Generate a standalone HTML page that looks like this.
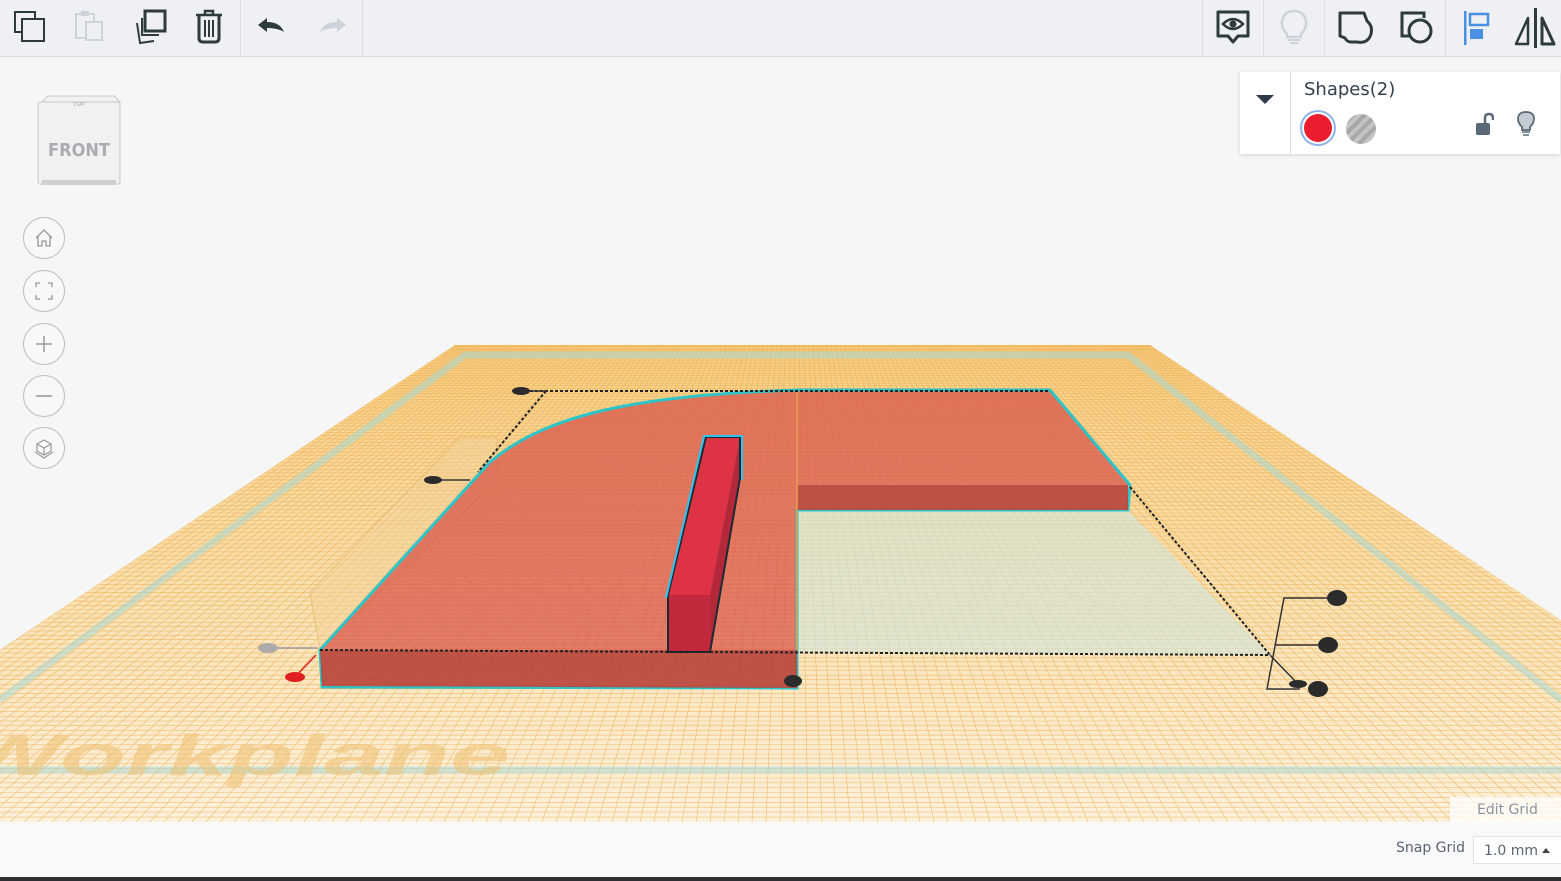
<!DOCTYPE html>
<html><head><meta charset="utf-8"><style>
html,body{margin:0;padding:0;width:1561px;height:881px;overflow:hidden;background:#f6f6f7;font-family:"Liberation Sans",sans-serif}
#tb{position:absolute;left:0;top:0;width:1561px;height:56px;background:#eff0f3;border-bottom:1px solid #dcdee3}
.div{position:absolute;top:0;width:1px;height:56px;background:#dcdee3}
.ic{position:absolute;top:8px}
#panel{position:absolute;left:1240px;top:72px;width:320px;height:82px;background:#fff;box-shadow:0 1px 4px rgba(0,0,0,.15)}
.nav{position:absolute;left:23px;width:42px;height:42px;border:1px solid #b9bcc2;border-radius:50%;box-sizing:border-box;background:#f8f8f8}
</style></head><body>
<svg id="scene" width="1561" height="881" style="position:absolute;left:0;top:0">
<defs>
<clipPath id="wp"><polygon points="455,345 1150,345 1561,620 1561,822 0,822 0,650"/></clipPath>
<linearGradient id="fade" x1="0" y1="0" x2="0" y2="1"><stop offset="0" stop-color="#f6cf86"/><stop offset="0.5" stop-color="#f9e0b0"/><stop offset="1" stop-color="#fdf1dc"/></linearGradient>
</defs>
<rect x="0" y="822" width="1561" height="55" fill="#f9f9f9"/>
<rect x="0" y="877" width="1561" height="4" fill="#2e2e33"/>
<polygon points="455,345 1150,345 1561,620 1561,822 0,822 0,650" fill="url(#fade)"/>
<g id="grid" clip-path="url(#wp)" stroke="#eeaa48" stroke-width="0.6" opacity="0.75"></g>
<g clip-path="url(#wp)" fill="none" stroke="#a8d8d4" stroke-width="7" opacity="0.55">
<polyline points="0,700 465,355 1128,355 1561,700"/>
<line x1="0" y1="770" x2="1561" y2="770"/>
</g>
<text x="0" y="0" font-size="80" font-weight="bold" font-style="italic" fill="#efc47a" opacity="0.6" font-family="Liberation Sans" transform="translate(-40,775) scale(1.35,0.72)">Workplane</text>
<polygon points="797,510 1128,510 1270,655 797,652" fill="#cfe6df" opacity="0.6"/>
<polygon points="310,592 460,437 497,437 497,480 320,650" fill="#f3d29a" opacity="0.5" stroke="#e0a850" stroke-width="1"/>
<path d="M320,650 L490,462 C540,420 620,395 800,390 L1050,390 L1128,485 L797,485 L797,650 Z" fill="#d8524a" opacity="0.72"/>
<path d="M320,650 L490,462 C540,420 620,395 800,390 L1050,390 L1130,485 L1128,510 L797,510 L797,688 L322,687 Z" fill="none" stroke="#2ec4c8" stroke-width="3"/>
<polygon points="797,485 1128,485 1128,510 797,510" fill="#b8433b" opacity="0.9"/>
<polygon points="320,650 797,650 797,688 322,686" fill="#b8433b" opacity="0.9"/>
<line x1="797" y1="390" x2="797" y2="650" stroke="#e0a050" stroke-width="1.5"/>
<polygon points="706,437 740,437 710,595 668,595" fill="#dd3344"/>
<polygon points="740,437 740,478 710,652 710,595" fill="#b3283a"/>
<polygon points="668,595 710,595 710,652 668,652" fill="#c02a3c"/>
<polygon points="706,437 740,437 740,478 710,652 668,652 668,595" fill="none" stroke="#1c2a33" stroke-width="2"/>
<polyline points="666,598 704,436 742,436 742,480" fill="none" stroke="#2ec4f0" stroke-width="2"/>
<g stroke="#222" stroke-width="2" stroke-dasharray="3,2" fill="none">
<line x1="520" y1="391" x2="1050" y2="391"/>
<line x1="546" y1="391" x2="478" y2="472"/>
<line x1="320" y1="650" x2="1270" y2="655"/>
<line x1="1130" y1="487" x2="1270" y2="655"/>
</g>
<g stroke="#333" stroke-width="1.5" fill="none">
<line x1="521" y1="391" x2="546" y2="391"/>
<line x1="433" y1="480" x2="470" y2="480"/>
<polyline points="1337,598 1284,598 1267,689 1300,689"/>
<line x1="1276" y1="645" x2="1328" y2="645"/>
<line x1="1270" y1="655" x2="1298" y2="684"/>
<line x1="268" y1="648" x2="318" y2="648" stroke="#999"/>
<line x1="295" y1="677" x2="316" y2="655" stroke="#d22"/>
</g>
<g fill="#2b2b2b">
<ellipse cx="521" cy="391" rx="9" ry="4"/>
<ellipse cx="433" cy="480" rx="9" ry="4"/>
<ellipse cx="793" cy="681" rx="9" ry="6"/>
<ellipse cx="1337" cy="598" rx="10" ry="8"/>
<ellipse cx="1328" cy="645" rx="10" ry="8"/>
<ellipse cx="1318" cy="689" rx="10" ry="8"/>
<ellipse cx="1298" cy="684" rx="9" ry="4"/>
</g>
<ellipse cx="268" cy="648" rx="10" ry="5" fill="#aaa"/>
<ellipse cx="295" cy="677" rx="10" ry="5" fill="#dd1f1f"/>
</svg>

<div id="tb">
 <div class="div" style="left:240px"></div><div class="div" style="left:362px"></div>
 <div class="div" style="left:1202px"></div><div class="div" style="left:1263px"></div><div class="div" style="left:1324px"></div><div class="div" style="left:1445px"></div>
 <svg class="ic" style="left:12px" width="36" height="36"><rect x="3" y="4" width="20" height="20" fill="none" stroke="#2d3a3e" stroke-width="2"/><rect x="10" y="11" width="22" height="22" fill="#eff0f3" stroke="#2d3a3e" stroke-width="2"/></svg>
 <svg class="ic" style="left:72px" width="36" height="36"><rect x="4" y="6" width="18" height="24" fill="none" stroke="#ccd3db" stroke-width="2"/><rect x="9" y="3" width="8" height="5" fill="#ccd3db"/><rect x="14" y="14" width="16" height="18" fill="#eff0f3" stroke="#ccd3db" stroke-width="2"/></svg>
 <svg class="ic" style="left:132px" width="36" height="36"><rect x="13" y="3" width="20" height="20" fill="none" stroke="#2d3a3e" stroke-width="3"/><path d="M10,10 L10,27 L27,27" fill="none" stroke="#2d3a3e" stroke-width="2"/><path d="M5,15 L8,35 L22,33" fill="none" stroke="#2d3a3e" stroke-width="2"/></svg>
 <svg class="ic" style="left:192px" width="36" height="36"><path d="M4,7 H30 M13,7 V3 H21 V7" fill="none" stroke="#2d3a3e" stroke-width="2.5"/><path d="M7,8 V30 Q7,34 11,34 H23 Q27,34 27,30 V8" fill="none" stroke="#2d3a3e" stroke-width="3"/><path d="M13,12 V29 M17,12 V29 M21,12 V29" stroke="#2d3a3e" stroke-width="2"/></svg>
 <svg class="ic" style="left:254px" width="36" height="36"><path d="M4,17 L13,10 V14 Q26,14 30,24 Q24,20 13,20 V24 Z" fill="#2d3a3e"/></svg>
 <svg class="ic" style="left:314px" width="36" height="36"><path d="M32,17 L23,10 V14 Q10,14 6,24 Q12,20 23,20 V24 Z" fill="#ccd3db"/></svg>
 <svg class="ic" style="left:1214px" width="40" height="40"><path d="M4,4 H34 V28 H24 L19,34 L14,28 H4 Z" fill="none" stroke="#2d3a3e" stroke-width="3" stroke-linejoin="round"/><path d="M9,16 Q19,6 29,16 Q19,26 9,16Z" fill="none" stroke="#2d3a3e" stroke-width="2.5"/><circle cx="19" cy="16" r="3.5" fill="#2d3a3e"/></svg>
 <svg class="ic" style="left:1277px" width="36" height="40"><path d="M10,26 Q4,20 5,13 Q7,3 17,3 Q27,3 29,13 Q30,20 24,26 V29 H10 Z" fill="none" stroke="#ccd3db" stroke-width="2.5"/><path d="M11,32 H23 M13,35 H21" stroke="#ccd3db" stroke-width="2"/></svg>
 <svg class="ic" style="left:1337px" width="40" height="40"><path d="M3,5 H27 L30,13 Q36,18 34,26 Q31,36 20,34 L14,34 Q10,34 8,30 L3,28 Z" fill="none" stroke="#2d3a3e" stroke-width="3" stroke-linejoin="round"/></svg>
 <svg class="ic" style="left:1399px" width="40" height="40"><path d="M22,5 H3 V28 H10" fill="none" stroke="#2d3a3e" stroke-width="3"/><path d="M22,5 H25 V10" fill="none" stroke="#2d3a3e" stroke-width="3"/><circle cx="21" cy="23" r="11" fill="none" stroke="#2d3a3e" stroke-width="3"/></svg>
 <svg class="ic" style="left:1460px" width="36" height="40"><rect x="4" y="3" width="2.5" height="34" fill="#4a90e2"/><rect x="10" y="6" width="18" height="11" fill="none" stroke="#4a90e2" stroke-width="2.5"/><rect x="10" y="21" width="13" height="10" fill="#4a90e2"/></svg>
 <svg class="ic" style="left:1514px" width="44" height="40"><path d="M14,10 V36 H2 Z" fill="none" stroke="#2d3a3e" stroke-width="2.5" stroke-linejoin="round"/><rect x="20" y="0" width="3" height="40" fill="#2d3a3e"/><path d="M28,10 V36 H40 Z" fill="none" stroke="#2d3a3e" stroke-width="3" stroke-linejoin="round"/></svg>
</div>

<div id="panel">
 <div style="position:absolute;left:50px;top:0;width:1px;height:82px;background:#dde0e4"></div>
 <div style="position:absolute;left:16px;top:23px;width:0;height:0;border-left:9px solid transparent;border-right:9px solid transparent;border-top:9px solid #2d3a4a"></div>
 <div style="position:absolute;left:64px;top:7px;font-family:'DejaVu Sans',sans-serif;font-size:18px;color:#33404e">Shapes(2)</div>
 <div style="position:absolute;left:60px;top:38px;width:36px;height:36px;border-radius:50%;border:2px solid #8fb4e8;box-sizing:border-box;background:#fff"></div>
 <div style="position:absolute;left:64px;top:42px;width:28px;height:28px;border-radius:50%;background:#ea1c2e"></div>
 <div style="position:absolute;left:106px;top:42px;width:30px;height:30px;border-radius:50%;background:repeating-linear-gradient(135deg,#c4c4c4 0 4px,#a8a8a8 4px 8px)"></div>
 <svg style="position:absolute;left:234px;top:40px" width="20" height="26"><path d="M11,11 V6 Q11,2 15,2 Q19,2 19,6 V8" fill="none" stroke="#5a6878" stroke-width="2.5"/><rect x="2" y="11" width="14" height="12" rx="2" fill="#5a6878"/></svg>
 <svg style="position:absolute;left:276px;top:38px" width="20" height="28"><path d="M6,17 Q2,13 2,9 Q2,2 10,2 Q18,2 18,9 Q18,13 14,17 V20 H6 Z" fill="#c5cbd2" stroke="#5a6878" stroke-width="1.8"/><path d="M6,22 H14 M7,25 H13" stroke="#5a6878" stroke-width="1.6"/></svg>
</div>

<svg style="position:absolute;left:34px;top:92px" width="92" height="100">
 <path d="M8,10 L14,4 H80 L86,10 Z" fill="#f2f2f2" stroke="#c8c8c8"/>
 <rect x="4" y="10" width="82" height="82" rx="2" fill="#f1f1f1" stroke="#c8c8c8"/>
 <rect x="8" y="88" width="74" height="5" fill="#cfcfcf"/>
 <text x="45" y="14" font-size="6" font-weight="bold" text-anchor="middle" fill="#bbb">TOP</text>
 <text x="45" y="64" font-size="18" font-weight="bold" text-anchor="middle" fill="#a9acb0" font-family="DejaVu Sans" transform="translate(45,0) scale(0.9,1) translate(-45,0)">FRONT</text>
</svg>

<div class="nav" style="top:217px"><svg width="40" height="40"><path d="M12,20 L20,12 L28,20 M14,18 V28 H18 V23 H22 V28 H26 V18" fill="none" stroke="#999" stroke-width="1.3"/></svg></div>
<div class="nav" style="top:270px"><svg width="40" height="40"><path d="M12,16 V12 H16 M24,12 H28 V16 M28,24 V28 H24 M16,28 H12 V24" fill="none" stroke="#999" stroke-width="1.3"/></svg></div>
<div class="nav" style="top:323px"><svg width="40" height="40"><path d="M20,12 V28 M12,20 H28" stroke="#999" stroke-width="1.5"/></svg></div>
<div class="nav" style="top:375px"><svg width="40" height="40"><path d="M12,20 H28" stroke="#999" stroke-width="1.5"/></svg></div>
<div class="nav" style="top:427px"><svg width="40" height="40"><path d="M20,12 L27,16 V23 L20,27 L13,23 V16 Z M13,16 L20,20 L27,16 M20,20 V27 M11,24 L20,30 L29,24" fill="none" stroke="#999" stroke-width="1.2"/></svg></div>

<div style="position:absolute;left:1450px;top:797px;width:111px;height:26px;background:rgba(255,255,255,0.75);font-family:'DejaVu Sans',sans-serif;font-size:14px;color:#8a939c;line-height:26px;text-indent:27px">Edit Grid</div>
<div style="position:absolute;left:1396px;top:840px;font-family:'DejaVu Sans',sans-serif;font-size:14px;color:#5a6572">Snap Grid</div>
<div style="position:absolute;left:1473px;top:836px;width:90px;height:28px;background:#fff;border:1px solid #e2e4e8;box-sizing:border-box;font-family:'DejaVu Sans',sans-serif;font-size:14px;color:#5a6572;line-height:28px;padding-left:10px">1.0 mm<span style="position:absolute;right:12px;top:11px;width:0;height:0;border-left:4px solid transparent;border-right:4px solid transparent;border-bottom:5px solid #444"></span></div>

<script>
var g=document.getElementById('grid'),s='';
var vx=795,vy=117;
for(var x=-3000;x<=4600;x+=14){s+='<line x1="'+vx+'" y1="'+vy+'" x2="'+x+'" y2="822"/>';}
for(var i=0;i<130;i++){var t=i/130;var y=345+(822-345)*(Math.pow(t,1.35));s+='<line x1="0" y1="'+y.toFixed(1)+'" x2="1561" y2="'+y.toFixed(1)+'"/>';}
g.innerHTML=s;
</script>
</body></html>
